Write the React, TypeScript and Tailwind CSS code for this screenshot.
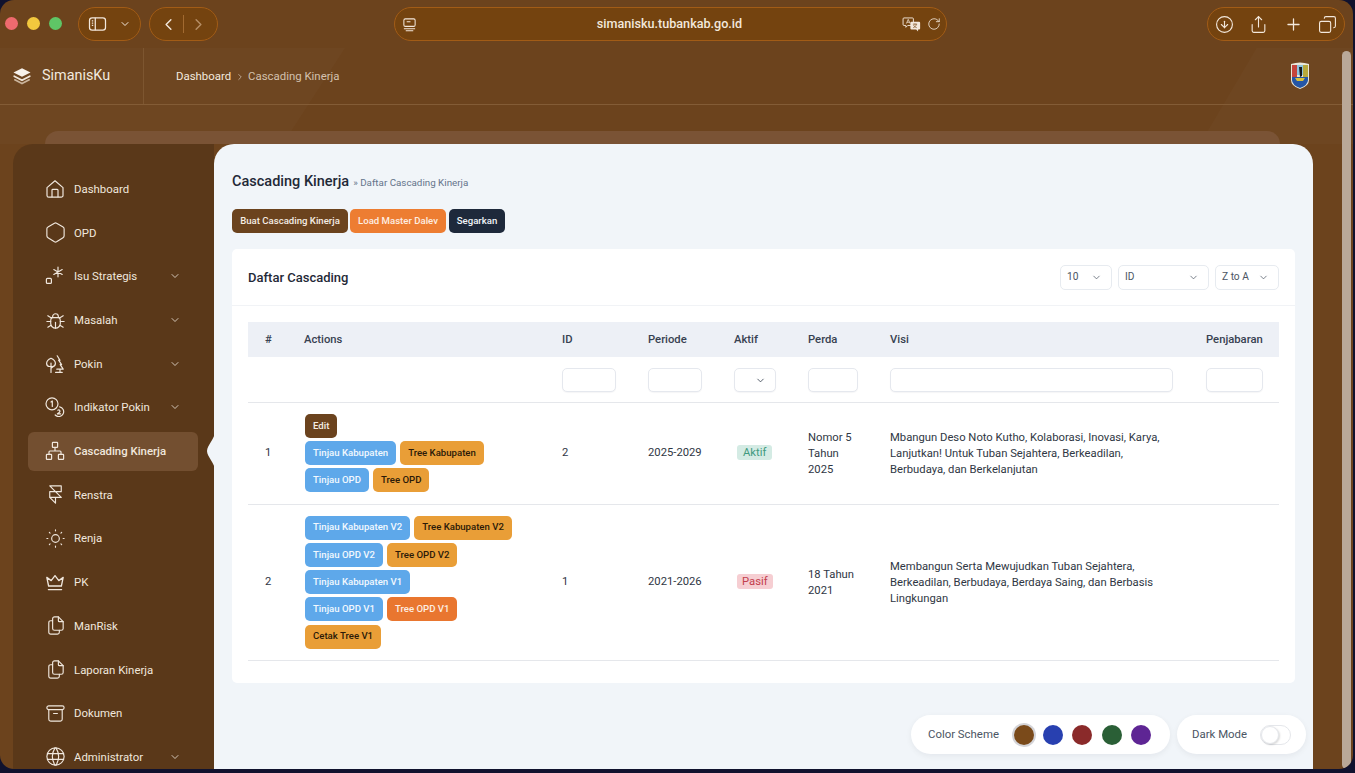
import React from "react";
import {
  ChevronDown,
  ChevronLeft,
  ChevronRight,
  CircleArrowDown,
  Copy,
  Plus,
  RotateCw,
  Share,
} from "lucide-react";
import {
  TbArchive,
  TbBrandFramer,
  TbBug,
  TbFiles,
  TbHexagon,
  TbSun,
  TbWorld,
} from "react-icons/tb";

type IconProps = { className?: string; strokeWidth?: number };

const HomeIcon = ({ className }: IconProps) => (
  <svg viewBox="0 0 20 20" fill="none" stroke="currentColor" strokeWidth="1.2" strokeLinejoin="round" className={className}>
    <path d="M2 8.600 10 1.800l8 6.800v7.800a1.800 1.800 0 0 1-1.800 1.800H3.800A1.800 1.800 0 0 1 2 16.400z" />
    <path d="M7 18.200v-7a.8.8 0 0 1 .8-.8h4.400a.8.8 0 0 1 .8.8v7" />
  </svg>
);

const AsteriskIcon = ({ className }: IconProps) => (
  <svg viewBox="0 0 20 20" fill="none" stroke="currentColor" strokeWidth="1.2" strokeLinecap="round" className={className}>
    <rect x="1.400" y="12.400" width="5" height="5" rx="1" />
    <path d="M13 1.200v9.600M8.800 3.600l8.400 4.800M17.200 3.600l-8.400 4.800" />
  </svg>
);

const TreesIcon = ({ className }: IconProps) => (
  <svg viewBox="0 0 20 20" fill="none" stroke="currentColor" strokeWidth="1.2" strokeLinecap="round" strokeLinejoin="round" className={className}>
    <path d="M6 4.200c2.600 1 4.400 3.400 4.400 5.400a3.200 3.200 0 0 1-3 2.900H4.600a3.200 3.200 0 0 1-3-2.900c0-2 1.800-4.400 4.400-5.400z" />
    <path d="M6 9v9.400M6 14.400l2-1.600" />
    <path d="M12.200 1.800 15 6.200h-1.400l3 4.400h-1.400l3 4.600h-6.400M15 15.200v3.200M10.600 18.400h6.600" />
  </svg>
);

const NumberedIcon = ({ className }: IconProps) => (
  <svg viewBox="0 0 20 20" fill="none" stroke="currentColor" strokeWidth="1.2" strokeLinecap="round" strokeLinejoin="round" className={className}>
    <circle cx="7" cy="6.800" r="6" />
    <path d="M6 5l1.300-1v5.400" />
    <path d="M14.600 9.800a4.900 4.900 0 1 1-4.400 8.200" />
    <path d="M12.800 13.200c1.800-.9 3 1.100 1.400 2.300l-1.800 1.300h3.200" />
  </svg>
);

const SitemapIcon = ({ className }: IconProps) => (
  <svg viewBox="0 0 20 20" fill="none" stroke="currentColor" strokeWidth="1.2" strokeLinejoin="round" className={className}>
    <rect x="7.400" y="1.400" width="5.200" height="5" rx="0.600" />
    <rect x="1.400" y="13.400" width="5.200" height="5" rx="0.600" />
    <rect x="13.400" y="13.400" width="5.200" height="5" rx="0.600" />
    <path d="M10 6.400v3.600M4 13.400V11a1 1 0 0 1 1-1h10a1 1 0 0 1 1 1v2.400" />
  </svg>
);

const CrownIcon = ({ className }: IconProps) => (
  <svg viewBox="0 0 20 20" fill="none" stroke="currentColor" strokeWidth="1.3" strokeLinecap="round" strokeLinejoin="round" className={className}>
    <path d="M3.600 14 1.800 5.400l4.400 3.200L10 3.600l3.800 5 4.400-3.200L16.400 14z" />
    <path d="M3.400 17.600h13.200" />
  </svg>
);

// tabler icons carry their own padding, so they are drawn a bit larger than the 20px slot
const large = "-mx-[1.5px] h-[23px] w-[23px]";

const menu = [
  { label: "Dashboard", icon: HomeIcon },
  { label: "OPD", icon: TbHexagon, tabler: true },
  { label: "Isu Strategis", icon: AsteriskIcon, sub: true },
  { label: "Masalah", icon: TbBug, tabler: true, sub: true },
  { label: "Pokin", icon: TreesIcon, sub: true },
  { label: "Indikator Pokin", icon: NumberedIcon, sub: true },
  { label: "Cascading Kinerja", icon: SitemapIcon, active: true },
  { label: "Renstra", icon: TbBrandFramer, tabler: true },
  { label: "Renja", icon: TbSun, tabler: true },
  { label: "PK", icon: CrownIcon },
  { label: "ManRisk", icon: TbFiles, tabler: true },
  { label: "Laporan Kinerja", icon: TbFiles, tabler: true },
  { label: "Dokumen", icon: TbArchive, tabler: true },
  { label: "Administrator", icon: TbWorld, tabler: true, sub: true },
];

const tone = {
  brown: "bg-[#6b431e] text-[#f5ede4]",
  blue: "bg-[#5ea8ea] text-[#f2f8fe]",
  amber: "bg-[#e99e37] text-[#2b1a08]",
  orange: "bg-[#e9762f] text-[#fdeee3]",
};

type Action = { label: string; tone: keyof typeof tone };

const rows: {
  no: string;
  id: string;
  periode: string;
  aktif: boolean;
  perda: string[];
  visi: string[];
  actions: Action[][];
}[] = [
  {
    no: "1",
    id: "2",
    periode: "2025-2029",
    aktif: true,
    perda: ["Nomor 5", "Tahun", "2025"],
    visi: [
      "Mbangun Deso Noto Kutho, Kolaborasi, Inovasi, Karya,",
      "Lanjutkan! Untuk Tuban Sejahtera, Berkeadilan,",
      "Berbudaya, dan Berkelanjutan",
    ],
    actions: [
      [{ label: "Edit", tone: "brown" }],
      [
        { label: "Tinjau Kabupaten", tone: "blue" },
        { label: "Tree Kabupaten", tone: "amber" },
      ],
      [
        { label: "Tinjau OPD", tone: "blue" },
        { label: "Tree OPD", tone: "amber" },
      ],
    ],
  },
  {
    no: "2",
    id: "1",
    periode: "2021-2026",
    aktif: false,
    perda: ["18 Tahun", "2021"],
    visi: [
      "Membangun Serta Mewujudkan Tuban Sejahtera,",
      "Berkeadilan, Berbudaya, Berdaya Saing, dan Berbasis",
      "Lingkungan",
    ],
    actions: [
      [
        { label: "Tinjau Kabupaten V2", tone: "blue" },
        { label: "Tree Kabupaten V2", tone: "amber" },
      ],
      [
        { label: "Tinjau OPD V2", tone: "blue" },
        { label: "Tree OPD V2", tone: "amber" },
      ],
      [{ label: "Tinjau Kabupaten V1", tone: "blue" }],
      [
        { label: "Tinjau OPD V1", tone: "blue" },
        { label: "Tree OPD V1", tone: "orange" },
      ],
      [{ label: "Cetak Tree V1", tone: "amber" }],
    ],
  },
];

const swatches = ["bg-[#7a4a1a]", "bg-[#2840b0]", "bg-[#8a2a2a]", "bg-[#2a5f36]", "bg-[#5e2594]"];

function ToolbarPill({ className, children }: { className: string; children: React.ReactNode }) {
  return (
    <div className={`flex h-[34px] items-center rounded-full border border-[#a25c16] bg-[#74430f] ${className}`}>
      {children}
    </div>
  );
}

function Toolbar() {
  return (
    <div className="flex h-[48px] items-start pt-[7px] text-[#f3e8dc]">
      <div className="flex w-[394px] shrink-0 items-center">
        <div className="ml-[5px] flex items-center gap-[9px] self-start pt-[10px]">
          <span className="h-[13px] w-[13px] rounded-full bg-[#ee6a6e]" />
          <span className="h-[13px] w-[13px] rounded-full bg-[#f2c83e]" />
          <span className="h-[13px] w-[13px] rounded-full bg-[#5fc566]" />
        </div>
        <ToolbarPill className="ml-[16px] w-[63px] pl-[9px]">
          <svg viewBox="0 0 20 18" fill="none" stroke="currentColor" strokeWidth="1.4" className="h-[16px] w-[19px]">
            <rect x="1" y="2" width="18" height="14" rx="3" />
            <path d="M7.500 2v14M3.600 5.500h1.600M3.600 8h1.600M3.600 10.500h1.600" />
          </svg>
          <ChevronDown className="ml-[12px] h-[12px] w-[12px]" strokeWidth={2} />
        </ToolbarPill>
        <ToolbarPill className="ml-[8px] w-[69px] justify-between px-[9px]">
          <ChevronLeft className="h-[19px] w-[19px]" strokeWidth={1.8} />
          <span className="h-[18px] w-px bg-[#a26a30]" />
          <ChevronRight className="h-[19px] w-[19px] text-[#b58e66]" strokeWidth={1.8} />
        </ToolbarPill>
      </div>
      <ToolbarPill className="w-[553px] pl-[7px] pr-[5px]">
        <svg viewBox="0 0 16 16" fill="none" stroke="currentColor" strokeWidth="1.1" className="h-[15px] w-[15px]">
          <rect x="2" y="2" width="12" height="8" rx="1.500" />
          <path d="M2 12.500h12M4 14.600h8M5 5h4" />
        </svg>
        <span className="flex-1 pl-[20px] text-center text-[12.6px] font-medium">simanisku.tubankab.go.id</span>
        <svg viewBox="0 0 20 16" className="h-[15px] w-[19px]">
          <path d="M2 1h9a1 1 0 0 1 1 1v6a1 1 0 0 1-1 1H6L4 11V9H2a1 1 0 0 1-1-1V2a1 1 0 0 1 1-1z" fill="none" stroke="currentColor" strokeWidth="1" />
          <path d="M4.500 7l2-4.500 2 4.500M5.200 5.600h2.600" fill="none" stroke="currentColor" strokeWidth="0.8" />
          <path d="M10 5h8a1.200 1.200 0 0 1 1.200 1.200v6A1.200 1.200 0 0 1 18 13.400h-1v2l-2-2h-5a1.200 1.200 0 0 1-1.200-1.200v-6A1.200 1.200 0 0 1 10 5z" fill="currentColor" />
          <path d="M11.500 7.600h4.500M13.700 7v1M15.200 7.800c-.4 2-1.800 3-3.400 3.600M12.200 8.600c.5 1.200 1.700 2.300 3.400 2.800" fill="none" stroke="#74430f" strokeWidth="0.7" />
        </svg>
        <RotateCw className="ml-[6px] h-[14px] w-[14px]" strokeWidth={1.4} />
      </ToolbarPill>
      <ToolbarPill className="ml-auto mr-[8px] w-[138px] justify-between px-[7px]">
        <CircleArrowDown className="h-[19px] w-[19px]" strokeWidth={1.4} />
        <Share className="h-[19px] w-[19px]" strokeWidth={1.4} />
        <Plus className="h-[19px] w-[19px]" strokeWidth={1.6} />
        <Copy className="h-[19px] w-[19px] -scale-x-100" strokeWidth={1.4} />
      </ToolbarPill>
    </div>
  );
}

function AppHeader() {
  return (
    <header className="relative flex h-[57px] items-stretch border-b border-[#835c36] text-[#f2e9df]">
      <div className="flex w-[144px] shrink-0 items-center border-r border-[#7d5630] pl-[12px]">
        <svg viewBox="0 0 20 20" className="h-[20px] w-[20px]">
          <path d="M10 2.200 18.500 6.500 10 10.800 1.500 6.500z" fill="#f7f1ea" />
          <path d="M2.200 10.200 10 14.200l7.800-4" fill="none" stroke="#f0e6da" strokeWidth="1.700" strokeLinecap="round" />
          <path d="M2.800 13.800 10 17.500l7.200-3.700" fill="none" stroke="#c9b39b" strokeWidth="1.700" strokeLinecap="round" />
        </svg>
        <span className="ml-[10px] text-[14.4px]">SimanisKu</span>
      </div>
      <nav className="flex items-center pl-[32px] pt-px text-[11.4px]">
        <span>Dashboard</span>
        <ChevronRight className="mx-[3.5px] h-[10px] w-[10px] text-[#c9b6a2]" />
        <span className="text-[#d3c1ae]">Cascading Kinerja</span>
      </nav>
      <svg viewBox="0 0 20 28" className="absolute left-[1290px] top-[14px] h-[28px] w-[20px]">
        <path d="M1 2q9-3 18 0v16q0 6-9 9-9-3-9-9z" fill="#e8e6d8" />
        <path d="M2 3h5v12H2z" fill="#c4453c" />
        <path d="M13 3h5v12h-5z" fill="#b7a93c" />
        <path d="M7 3h6v10H7z" fill="#8cc3de" />
        <path d="M9 5h3v9l-2 1z" fill="#16181c" />
        <path d="M2 15h16v3q0 5-8 8-8-3-8-8z" fill="#2456a6" />
        <path d="M5 16h10l-2 3H7z" fill="#d8c13a" />
      </svg>
    </header>
  );
}

function Sidebar() {
  return (
    <aside className="flex w-[201px] shrink-0 flex-col gap-[4.69px] overflow-hidden rounded-tl-[20px] bg-[#5a3819] pl-[15px] pr-[16px] pt-[25.5px] text-[11.4px] text-[#f0e7dd]">
      {menu.map((item) => {
        const Icon = item.icon;
        return (
          <div
            key={item.label}
            className={`flex h-[39px] shrink-0 items-center rounded-[6px] pl-[17px] pr-[17px] ${item.active ? "bg-[#734f30] font-medium" : ""}`}
          >
            {item.tabler ? (
              <Icon className={`${large} shrink-0`} strokeWidth={1.2} />
            ) : (
              <Icon className="h-[20px] w-[20px] shrink-0" />
            )}
            <span className="ml-[9px] flex-1 whitespace-nowrap pt-px">{item.label}</span>
            {item.sub && <ChevronDown className="h-[12px] w-[12px] shrink-0" strokeWidth={1.6} />}
          </div>
        );
      })}
    </aside>
  );
}

function SelectBox({ label, className }: { label: string; className: string }) {
  return (
    <div className={`flex h-[25px] items-center justify-between rounded-[5px] border border-[#e7ebf0] bg-white pl-[6px] pr-[9px] text-[10.2px] text-[#4b5563] ${className}`}>
      <span>{label}</span>
      <ChevronDown className="h-[11px] w-[11px]" strokeWidth={1.6} />
    </div>
  );
}

function FilterBox({ className, select }: { className: string; select?: boolean }) {
  return (
    <div className={`flex h-[24px] items-center justify-end rounded-[5px] border border-[#e5e8ee] bg-white pr-[9px] shadow-[0_1px_1px_rgba(15,23,42,0.04)] ${className}`}>
      {select && <ChevronDown className="h-[11px] w-[11px] text-[#374151]" strokeWidth={1.8} />}
    </div>
  );
}

function DataTable() {
  const heads = ["#", "Actions", "ID", "Periode", "Aktif", "Perda", "Visi", "Penjabaran"];
  return (
    <table className="w-full table-fixed border-collapse text-[11.25px] text-[#2f3744]">
      <colgroup>
        <col className="w-[40px]" />
        <col className="w-[258px]" />
        <col className="w-[86px]" />
        <col className="w-[86px]" />
        <col className="w-[74px]" />
        <col className="w-[82px]" />
        <col className="w-[316px]" />
        <col />
      </colgroup>
      <thead>
        <tr className="h-[35px] bg-[#edf0f6]">
          {heads.map((h, i) => (
            <th key={h} className={`px-4 pt-[2px] text-left text-[11.25px] font-medium text-[#374151] ${i === 0 ? "pl-[17px] pr-0" : ""}`}>
              {h}
            </th>
          ))}
        </tr>
        <tr className="h-[45px] border-b border-[#e5e7eb]">
          <th />
          <th />
          <th className="px-4 pt-[2px]"><FilterBox className="w-[54px]" /></th>
          <th className="px-4 pt-[2px]"><FilterBox className="w-[54px]" /></th>
          <th className="px-4 pt-[2px]"><FilterBox className="w-[42px]" select /></th>
          <th className="px-4 pt-[2px]"><FilterBox className="w-[50px]" /></th>
          <th className="px-4 pt-[2px]"><FilterBox className="w-[283px]" /></th>
          <th className="px-4 pt-[2px]"><FilterBox className="w-[57px]" /></th>
        </tr>
      </thead>
      <tbody>
        {rows.map((row) => (
          <tr key={row.no} className="h-[102px] border-b border-[#e5e7eb]">
            <td className="pl-[17px] pt-px">{row.no}</td>
            <td className="py-[11px] pl-[17px]">
              <div className="flex flex-col gap-[3.25px]">
                {row.actions.map((line, i) => (
                  <div key={i} className="flex gap-[4px]">
                    {line.map((a) => (
                      <span
                        key={a.label}
                        className={`flex h-[24px] items-center whitespace-nowrap rounded-[5px] px-[8px] text-[9.6px] font-medium ${tone[a.tone]}`}
                      >
                        {a.label}
                      </span>
                    ))}
                  </div>
                ))}
              </div>
            </td>
            <td className="px-4 pt-px">{row.id}</td>
            <td className="whitespace-nowrap px-4 pt-px">{row.periode}</td>
            <td className="px-4 pt-px">
              {row.aktif ? (
                <span className="ml-[3px] rounded-[3px] bg-[#d4ebe4] px-[6px] py-px text-[#3f9a7f]">Aktif</span>
              ) : (
                <span className="ml-[3px] rounded-[3px] bg-[#f6ced2] px-[5px] py-px text-[#c2404e]">Pasif</span>
              )}
            </td>
            <td className="px-4 pt-px leading-[16px]">
              {row.perda.map((t) => (
                <div key={t}>{t}</div>
              ))}
            </td>
            <td className="px-4 pt-px leading-[16px]">
              {row.visi.map((t) => (
                <div key={t} className="whitespace-nowrap">{t}</div>
              ))}
            </td>
            <td />
          </tr>
        ))}
      </tbody>
    </table>
  );
}

function ContentArea() {
  return (
    <main className="relative flex-1 overflow-hidden rounded-t-[20px] bg-[#f1f5f9] px-[18px]">
      <div className="flex h-[65px] items-end pb-[17px]">
        <h1 className="text-[14.5px] font-medium leading-[20px] text-[#1f2937]">Cascading Kinerja</h1>
        <span className="ml-[4px] pb-[1px] text-[9.8px] leading-[16px] text-[#64748b]">» Daftar Cascading Kinerja</span>
      </div>
      <div className="flex gap-[2px]">
        <button type="button" className="h-[24px] w-[116px] rounded-[5px] bg-[#6b431e] text-[9.6px] font-medium text-[#f5ede4]">Buat Cascading Kinerja</button>
        <button type="button" className="h-[24px] w-[96px] rounded-[5px] bg-[#ed7d32] text-[9.6px] font-medium text-[#fdeee3]">Load Master Dalev</button>
        <button type="button" className="ml-px h-[24px] w-[56px] rounded-[5px] bg-[#1e293b] text-[9.6px] font-medium text-[#f1f5f9]">Segarkan</button>
      </div>
      <section className="mt-[16px] rounded-[5px] bg-white pb-[22px]">
        <div className="flex h-[57px] items-center border-b border-[#f1f3f6] pl-[16px] pr-[16px]">
          <h2 className="flex-1 pt-[2px] text-[13px] font-medium text-[#1f2937]">Daftar Cascading</h2>
          <div className="flex gap-[6px]">
            <SelectBox label="10" className="w-[52px]" />
            <SelectBox label="ID" className="w-[91px]" />
            <SelectBox label="Z to A" className="w-[64px]" />
          </div>
        </div>
        <div className="px-[16px] pt-[16px]">
          <DataTable />
        </div>
      </section>

      <div className="absolute left-[697px] top-[571px] flex h-[39px] w-[259px] items-center rounded-full bg-white pl-[17px] text-[11.4px] text-[#4b5563] shadow-[0_2px_6px_rgba(15,23,42,0.06)]">
        <span>Color Scheme</span>
        <div className="ml-[15px] flex items-center gap-[9.25px]">
          {swatches.map((c, i) => (
            <span key={c} className={`h-[20px] w-[20px] rounded-full ${c} ${i === 0 ? "ring-2 ring-[#d4d4d8]" : ""}`} />
          ))}
        </div>
      </div>
      <div className="absolute left-[963px] top-[571px] flex h-[39px] w-[129px] items-center rounded-full bg-white pl-[15px] text-[11.4px] text-[#4b5563] shadow-[0_2px_6px_rgba(15,23,42,0.06)]">
        <span>Dark Mode</span>
        <span className="relative ml-[13px] h-[20px] w-[31px] rounded-full border border-[#e5e7eb] bg-white">
          <span className="absolute left-0 top-0 h-[18px] w-[18px] rounded-full border border-[#e5e7eb] bg-white shadow-[1px_1px_2px_rgba(0,0,0,0.15)]" />
        </span>
      </div>
    </main>
  );
}

export default function App() {
  return (
    <div className="h-[773px] w-[1355px] overflow-hidden bg-[#10122e] font-['Roboto',sans-serif]">
      <div className="relative h-[769px] w-[1353px] overflow-hidden rounded-[14px] bg-[#6c431d]">
        {/* lighter wedges behind the header */}
        <div className="absolute left-0 top-[48px] h-[96px] w-[345px] bg-white/[0.02] [clip-path:polygon(0_0,100%_0,82%_100%,0_100%)]" />
        <div className="absolute right-0 top-[48px] h-[96px] w-[153px] bg-white/[0.02] [clip-path:polygon(37%_0,100%_0,100%_100%,0_100%)]" />
        <div className="relative">
          <Toolbar />
          <AppHeader />
          <div className="mx-[45px] mt-[26px] h-[13px] w-[1235px] rounded-t-[16px] bg-[#7a5335]" />
          <div className="relative ml-[13px] flex h-[625px] w-[1300px]">
            <Sidebar />
            <ContentArea />
            <svg viewBox="0 0 9 40" className="absolute left-[193px] top-[287px] h-[40px] w-[9px]">
              <path d="M9 0C9 8 1 14 1 20s8 12 8 20z" fill="#f1f5f9" />
            </svg>
          </div>
        </div>
        <div className="absolute left-[1342px] top-[51px] h-[718px] w-[9px] rounded-full bg-[#b9a898]" />
      </div>
    </div>
  );
}
